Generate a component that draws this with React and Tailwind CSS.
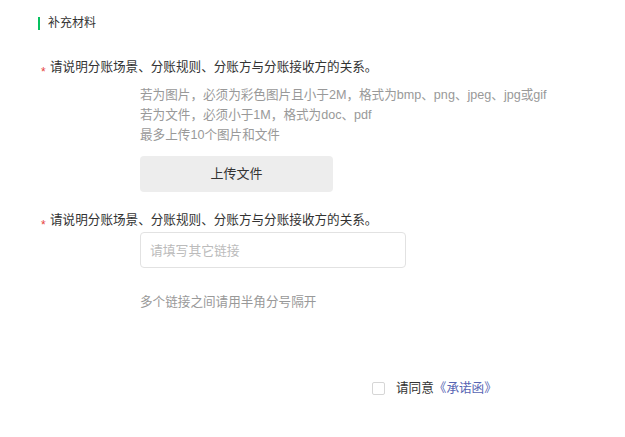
import React, { useState } from "react";

const font = { fontFamily: '"Liberation Sans", "Noto Sans CJK SC", sans-serif' };

const Label = ({ children }) => (
  <div className="flex items-end pl-[41px] text-[12.6px] text-[#333] leading-[16px]">
    <span className="w-[9px] text-[#e64340] text-[12px] leading-[14px] translate-y-[4px]">*</span>
    <span>{children}</span>
  </div>
);

const App = () => {
  const [link, setLink] = useState("");
  const [agree, setAgree] = useState(false);

  return (
    <div className="w-[625px] h-[437px] bg-white" style={font}>
      {/* header */}
      <div className="flex items-center pt-[16px] pl-[38px]">
        <span className="w-[2px] h-[13px] bg-[#07c160]" />
        <span className="ml-[8px] text-[12px] text-[#333] leading-[14px]">补充材料</span>
      </div>

      <div className="mt-[29px]">
        <Label>请说明分账场景、分账规则、分账方与分账接收方的关系。</Label>
        <div className="pl-[140px] mt-[10px] text-[12.6px] text-[#999] leading-[20px]">
          <p>若为图片，必须为彩色图片且小于2M，格式为bmp、png、jpeg、jpg或gif</p>
          <p>若为文件，必须小于1M，格式为doc、pdf</p>
          <p>最多上传10个图片和文件</p>
          <button className="mt-[11px] w-[193px] h-[36px] rounded-[4px] bg-[#ededed] text-[13px] text-[#333]">
            上传文件
          </button>
        </div>
      </div>

      <div className="mt-[20px]">
        <Label>请说明分账场景、分账规则、分账方与分账接收方的关系。</Label>
        <div className="pl-[140px] mt-[4px]">
          <input
            value={link}
            onChange={(e) => setLink(e.target.value)}
            placeholder="请填写其它链接"
            className="w-[266px] h-[36px] rounded-[4px] border border-[#e2e2e2] px-[9px] text-[12.8px] text-[#333] placeholder:text-[#bbb] outline-none"
          />
          <p className="mt-[24px] text-[12.6px] text-[#999] leading-[20px]">多个链接之间请用半角分号隔开</p>
        </div>
      </div>

      <div className="flex items-center pl-[372px] mt-[66px] text-[12.6px] leading-[20px]">
        <span
          onClick={() => setAgree(!agree)}
          className="w-[13px] h-[13px] border border-[#d6d6d6] rounded-[2px] bg-white"
        />
        <span className="ml-[11px] text-[#333]">请同意</span>
        <span className="text-[#5765b3]">《承诺函》</span>
      </div>
    </div>
  );
};

export default App;
